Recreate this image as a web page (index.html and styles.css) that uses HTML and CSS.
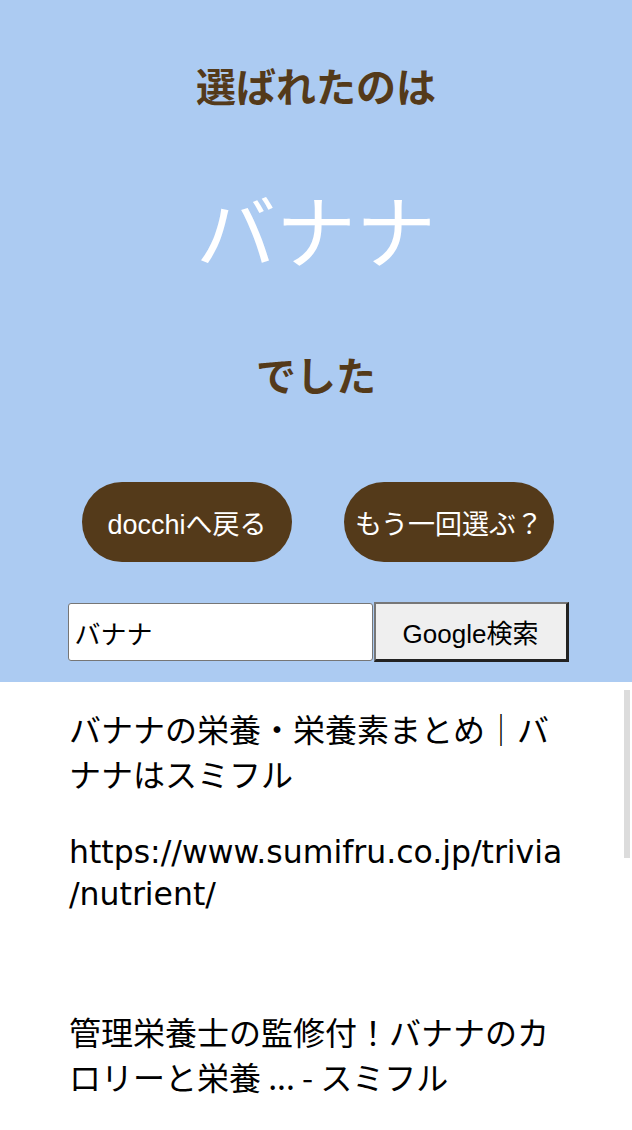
FILE: index.html
```html
<!DOCTYPE html>
<html lang="ja">
<head>
<meta charset="utf-8">
<title>docchi</title>
<link rel="stylesheet" href="styles.css">
</head>
<body>
<header class="hero">
  <p class="lead">選ばれたのは</p>
  <p class="choice">バナナ</p>
  <p class="tail">でした</p>
  <div class="actions">
    <a class="pill" href="#">docchiへ戻る</a>
    <a class="pill" href="#">もう一回選ぶ？</a>
  </div>
  <form class="search">
    <input class="search-input" type="text" value="バナナ">
    <button class="search-btn" type="button">Google検索</button>
  </form>
</header>
<main class="results">
  <div class="thumb"></div>
  <article class="result">
    <p class="r-title">バナナの栄養・栄養素まとめ｜バナナはスミフル</p>
    <p class="r-url">https://www.sumifru.co.jp/trivia<wbr>/nutrient/</p>
  </article>
  <article class="result">
    <p class="r-title">管理栄養士の監修付！バナナのカロリーと栄養 ... - スミフル</p>
  </article>
</main>
</body>
</html>
```

FILE: styles.css
```css
* { box-sizing: border-box; }
html, body { margin: 0; padding: 0; }
body {
  width: 632px;
  height: 1130px;
  overflow: hidden;
  background: #fff;
  font-family: "Liberation Sans", "Noto Sans CJK JP", sans-serif;
}
.hero {
  background: #accbf2;
  height: 682px;
  display: flex;
  flex-direction: column;
  align-items: center;
  padding-top: 61px;
}
.hero p { margin: 0; }
.lead, .tail {
  font-family: "Noto Sans CJK JP", sans-serif;
  font-weight: 700;
  font-size: 40px;
  line-height: 48px;
  color: #543a1a;
}
.choice {
  font-family: "Noto Sans CJK JP", sans-serif;
  font-size: 80px;
  line-height: 96px;
  color: #fff;
  margin-top: 70px !important;
}
.tail { margin-top: 75px !important; }
.actions {
  display: flex;
  gap: 52px;
  margin-top: 84px;
  padding-left: 4px;
}
.pill {
  width: 210px;
  height: 80px;
  border-radius: 40px;
  background: #543a1a;
  color: #fff;
  text-decoration: none;
  display: flex;
  align-items: center;
  justify-content: center;
  font-size: 27px;
}
.search {
  display: flex;
  margin-top: 40px;
  padding-left: 4px;
  align-items: flex-start;
}
.search-input {
  width: 305px;
  height: 58px;
  margin-top: 1px;
  border: 1px solid #767676;
  border-radius: 3px;
  background: #fff;
  font-family: "Noto Sans CJK JP", sans-serif;
  font-size: 26px;
  padding: 0 6px;
  color: #000;
}
.search-btn {
  width: 195px;
  height: 60px;
  margin-left: 1px;
  background: #efefef;
  border-style: solid;
  border-color: #777 #222 #222 #777;
  border-width: 2px 3px 3px 2px;
  font-family: "Liberation Sans", "Noto Sans CJK JP", sans-serif;
  font-size: 26px;
  color: #000;
  padding: 0;
}
.results {
  position: relative;
  padding: 24px 63px 0 69px;
  color: #000;
}
.thumb {
  position: absolute;
  right: 2px;
  top: 8px;
  width: 6px;
  height: 168px;
  background: #dcdcdc;
}
.result p { margin: 0; }
.r-title {
  font-family: "Noto Sans CJK JP", sans-serif;
  font-size: 32px;
  line-height: 45px;
}
.r-url {
  font-family: "DejaVu Sans", "Noto Sans CJK JP", sans-serif;
  font-size: 31.5px;
  line-height: 42px;
  margin-top: 35px !important;
}
.result + .result { margin-top: 94px; }
```
